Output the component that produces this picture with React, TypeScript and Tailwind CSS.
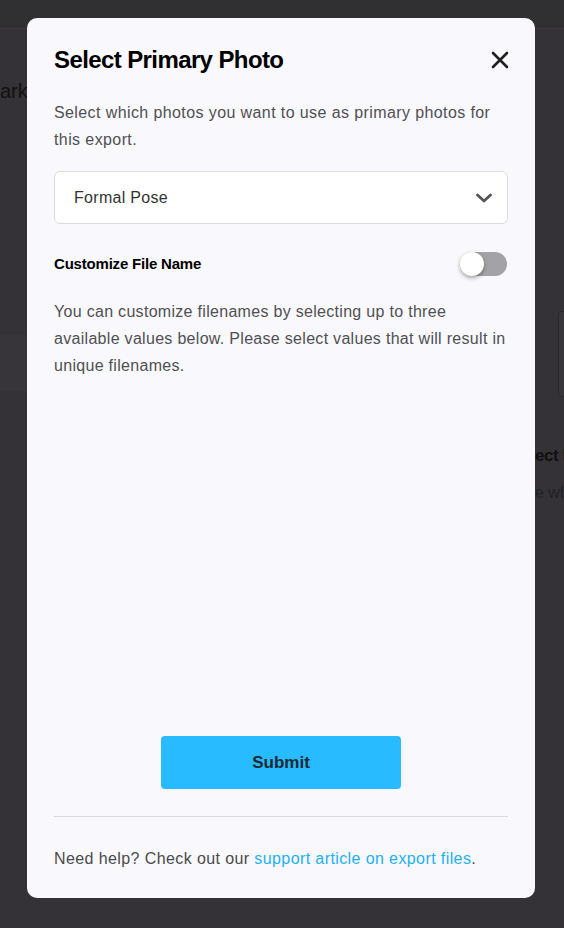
import React from "react";

export default function App() {
  return (
    <div className="relative h-[928px] w-[564px] overflow-hidden bg-[#343236]" style={{ fontFamily: '"Liberation Sans", Arial, sans-serif' }}>
      {/* faint background page */}
      <div className="flex h-[29px] border-b border-[#3b393d] bg-[#302f32]" />
      <div className="relative h-[899px]">
        <div className="absolute left-0 top-[47px] text-[20px] text-[#121113]">ark</div>
        <div className="absolute left-0 top-[306px] h-[56px] w-[30px] bg-[#373539]" />
        <div className="absolute left-[558px] top-[282px] h-[86px] w-[20px] rounded border border-[#2a292c] bg-[#38363a]" />
        <div className="absolute left-[535px] top-[414px] whitespace-nowrap text-[17px] font-bold tracking-tight text-[#111]">ect B</div>
        <div className="absolute left-[535px] top-[452px] whitespace-nowrap text-[16px] text-[#222124]">e wh</div>
      </div>

      {/* modal */}
      <div className="absolute left-[27px] top-[18px] flex h-[880px] w-[508px] flex-col rounded-[10px] bg-[#f8f8fd] px-[27px]">
        <div className="flex items-center justify-between pt-[28px]">
          <h2 className="text-[24px] font-bold leading-[28px] tracking-[-0.6px] text-[#000]">Select Primary Photo</h2>
          <svg width="18" height="18" viewBox="0 0 18 18" className="mr-[-1px]">
            <path d="M2 2 L16 16 M16 2 L2 16" stroke="#1f1f1f" strokeWidth="2.6" strokeLinecap="round" />
          </svg>
        </div>
        <p className="mt-[25px] text-[16px] leading-[27px] tracking-[0.4px] text-[#505052]">
          Select which photos you want to use as primary photos for this export.
        </p>
        <div className="mt-[18px] flex h-[53px] items-center justify-between rounded-[6px] border border-[#dcdce0] bg-white pl-[19px] pr-[14px]">
          <span className="text-[16px] tracking-[0.3px] text-[#333]">Formal Pose</span>
          <svg width="18" height="12" viewBox="0 0 18 12">
            <path d="M2.5 3 L9 9 L15.5 3" fill="none" stroke="#555" strokeWidth="2.8" strokeLinecap="round" strokeLinejoin="round" />
          </svg>
        </div>
        <div className="mt-[28px] flex items-center justify-between">
          <span className="text-[15px] font-bold tracking-[-0.2px] text-[#000]">Customize File Name</span>
          <div className="relative mr-[1px] h-[24px] w-[46px] rounded-full bg-[#a3a2a6]">
            <div className="absolute left-[-1px] top-0 h-[24px] w-[24px] rounded-full bg-white shadow-[0_2px_4px_rgba(0,0,0,0.35)]" />
          </div>
        </div>
        <p className="mt-[22px] text-[16px] leading-[27px] tracking-[0.3px] text-[#505052]">
          You can customize filenames by selecting up to three available values below. Please select values that will result in unique filenames.
        </p>
        <div className="flex-1" />
        <div className="flex justify-center">
          <button className="h-[53px] w-[240px] rounded-[4px] bg-[#29bbff] text-[17px] font-bold text-[#1e2a33]">
            Submit
          </button>
        </div>
        <div className="mt-[27px] h-px bg-[#dcdce0]" />
        <p className="mt-[31px] pb-[28px] text-[16px] leading-[22px] tracking-[0.4px] text-[#4a4a4c]">
          Need help? Check out our <span className="text-[#1fb0f0]">support article on export files</span>.
        </p>
      </div>
    </div>
  );
}
